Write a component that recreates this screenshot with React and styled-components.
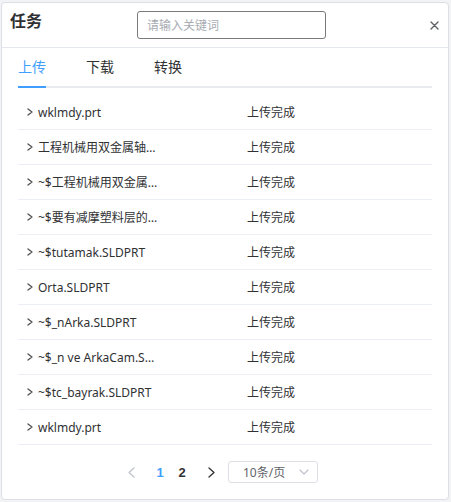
import React from "react";
import styled, { createGlobalStyle } from "styled-components";

const Global = createGlobalStyle`
  html, body { margin: 0; padding: 0; background: #f2f3f5; }
  body { font-family: "Noto Sans", "Noto Sans CJK SC", sans-serif; color: #303133; }
  * { box-sizing: border-box; }
`;

const Card = styled.div`
  margin: 2px 0 0 1px;
  width: 448px;
  height: 498px;
  background: #fff;
  border: 1px solid #dcdfe6;
  border-radius: 4px;
  display: flex;
  flex-direction: column;
`;

const Header = styled.div`
  height: 45px;
  display: flex;
  align-items: center;
  padding: 0 9px 0 8px;
  border-bottom: 1px solid #e4e7ed;
`;

const Title = styled.div`
  font-size: 16px;
  font-weight: 700;
  color: #303133;
  margin-top: -8px;
  line-height: 20px;
`;

const Search = styled.input`
  margin-left: 95px;
  width: 189px;
  height: 28px;
  border: 1px solid #7a7a7a;
  border-radius: 3px;
  padding: 0 9px;
  font-family: inherit;
  font-size: 12px;
  outline: none;
  color: #606266;
  &::placeholder { color: #a8abb2; }
`;

const Close = styled.button`
  margin-left: auto;
  border: 0;
  background: none;
  padding: 0;
  width: 10px;
  height: 10px;
  display: flex;
  align-items: center;
  justify-content: center;
  cursor: pointer;
`;

const TabBar = styled.div`
  margin: 0 16px;
  height: 40px;
  display: flex;
  position: relative;
  border-bottom: 2px solid #e8eaee;
`;

const Tab = styled.div`
  position: relative;
  padding: 0 20px;
  font-size: 14px;
  line-height: 38px;
  color: ${(p) => (p.$active ? "#409eff" : "#303133")};
  &:first-child { padding-left: 0; }
  &::after {
    content: "";
    display: ${(p) => (p.$active ? "block" : "none")};
    position: absolute;
    left: 0;
    bottom: -2px;
    width: 28px;
    height: 2px;
    background: #409eff;
  }
`;

const List = styled.div`
  margin: 7px 16px 0;
`;

const Row = styled.div`
  height: 35px;
  display: flex;
  align-items: center;
  border-bottom: 1px solid #ebeef5;
  font-size: 12px;
  color: #303133;
`;

const Expand = styled.div`
  width: 20px;
  padding-left: 9px;
  display: flex;
  align-items: center;
`;

const NameCell = styled.div`
  width: 209px;
`;

const Name = styled.div`
  max-width: 122px;
  white-space: nowrap;
  overflow: hidden;
  text-overflow: ellipsis;
`;

const Status = styled.div``;

const Pager = styled.div`
  margin-top: 16px;
  height: 22px;
  display: flex;
  align-items: center;
  justify-content: center;
  padding-right: 16px;
`;

const NavBtn = styled.div`
  width: 30px;
  height: 22px;
  display: flex;
  align-items: center;
  justify-content: center;
  margin: ${(p) => (p.$next ? "0 0 0 3px" : "0 3px 0 0")};
`;

const PageNum = styled.div`
  width: 22px;
  text-align: center;
  font-size: 13px;
  font-weight: 700;
  font-family: "Liberation Sans", "Noto Sans", sans-serif;
  color: ${(p) => (p.$active ? "#409eff" : "#303133")};
`;

const Select = styled.div`
  margin-left: 2px;
  width: 90px;
  height: 22px;
  border: 1px solid #dcdfe6;
  border-radius: 3px;
  display: flex;
  align-items: center;
  padding: 0 8px 0 14px;
  font-size: 12px;
  color: #606266;
  justify-content: space-between;
`;

const Chevron = ({ dir = "right", color = "#606266", w = 6, h = 9 }) => {
  const d =
    dir === "right"
      ? `M1 1 L${w - 1} ${h / 2} L1 ${h - 1}`
      : dir === "left"
      ? `M${w - 1} 1 L1 ${h / 2} L${w - 1} ${h - 1}`
      : `M1 1 L${w / 2} ${h - 1} L${w - 1} 1`;
  return (
    <svg width={w} height={h} viewBox={`0 0 ${w} ${h}`}>
      <path d={d} fill="none" stroke={color} strokeWidth="1.3" strokeLinecap="round" strokeLinejoin="round" />
    </svg>
  );
};

const files = [
  "wklmdy.prt",
  "工程机械用双金属轴套的设计.SLDPRT",
  "~$工程机械用双金属轴套.SLDPRT",
  "~$要有减摩塑料层的轴套.SLDPRT",
  "~$tutamak.SLDPRT",
  "Orta.SLDPRT",
  "~$_nArka.SLDPRT",
  "~$_n ve ArkaCam.SLDPRT",
  "~$tc_bayrak.SLDPRT",
  "wklmdy.prt",
];

export default function App() {
  return (
    <>
      <Global />
      <Card>
        <Header>
          <Title>任务</Title>
          <Search placeholder="请输入关键词" />
          <Close aria-label="close">
            <svg width="9" height="9" viewBox="0 0 9 9">
              <path d="M1 1 L8 8 M8 1 L1 8" stroke="#606266" strokeWidth="1.4" strokeLinecap="round" />
            </svg>
          </Close>
        </Header>
        <TabBar>
          <Tab $active>上传</Tab>
          <Tab>下载</Tab>
          <Tab>转换</Tab>
        </TabBar>
        <List>
          {files.map((f, i) => (
            <Row key={i}>
              <Expand>
                <Chevron dir="right" w={6} h={8} color="#505050" />
              </Expand>
              <NameCell>
                <Name>{f}</Name>
              </NameCell>
              <Status>上传完成</Status>
            </Row>
          ))}
        </List>
        <Pager>
          <NavBtn>
            <Chevron dir="left" color="#c0c4cc" w={7} h={11} />
          </NavBtn>
          <PageNum $active>1</PageNum>
          <PageNum>2</PageNum>
          <NavBtn $next>
            <Chevron dir="right" color="#303133" w={7} h={11} />
          </NavBtn>
          <Select>
            <span>10条/页</span>
            <Chevron dir="down" color="#c0c4cc" w={10} h={6} />
          </Select>
        </Pager>
      </Card>
    </>
  );
}
